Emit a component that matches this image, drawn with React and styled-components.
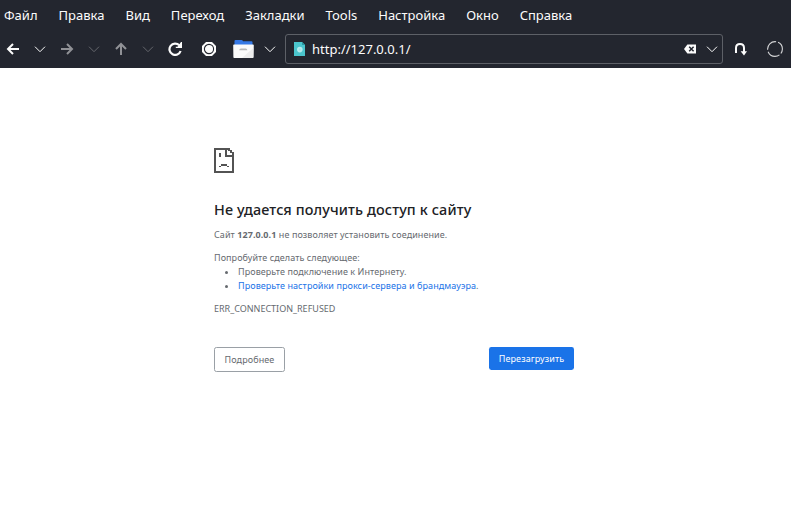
import React from "react";
import styled, { createGlobalStyle } from "styled-components";

const GlobalStyle = createGlobalStyle`
  * { box-sizing: border-box; }
  body { margin: 0; background: #fff; overflow: hidden; font-family: "Noto Sans", sans-serif; }
`;

const Window = styled.div`
  display: flex;
  flex-direction: column;
  width: 791px;
  height: 506px;
`;

const MenuBar = styled.nav`
  display: flex;
  gap: 21px;
  height: 31px;
  padding-left: 4px;
  background: #23262f;
  color: #fcfcfc;
  font-size: 13px;
  line-height: 31px;
  white-space: nowrap;
`;

const MenuItem = styled.span`
  flex: 0 0 auto;
`;

const ToolBar = styled.div`
  display: flex;
  align-items: flex-start;
  height: 37px;
  padding-top: 3px;
  background: #23262f;
  color: #fcfcfc;
`;

const Tool = styled.div`
  display: flex;
  flex: 0 0 ${(p) => p.$width}px;
  align-items: center;
  justify-content: center;
  height: 30px;
  opacity: ${(p) => (p.$faded ? p.$faded : 1)};
  svg { display: block; flex: none; }
`;

const AddressField = styled.div`
  display: flex;
  align-items: center;
  width: 438px;
  height: 30px;
  margin-left: 1px;
  padding-left: 8px;
  border: 1px solid #5d6067;
  border-radius: 3px;
  font-size: 13px;
  svg { display: block; flex: none; }
`;

const Address = styled.span`
  flex: 1;
  margin-left: 7px;
  line-height: 28px;
`;

const Page = styled.main`
  width: 360px;
  margin: 80px 0 0 214px;
  color: #666a6f;
  font-size: 9px;
  letter-spacing: 0.075px;
  line-height: 14px;
  svg { display: block; }
`;

const Title = styled.h1`
  margin: 27px 0 0;
  color: #202124;
  font-size: 14.4px;
  font-weight: 500;
  letter-spacing: 0.12px;
  line-height: 20px;
`;

const Paragraph = styled.p`
  margin: ${(p) => p.$top}px 0 0;
`;

const ErrorCode = styled(Paragraph)`
  letter-spacing: 0;
`;

const Tips = styled.ul`
  margin: 0;
  padding-left: 24px;
`;

const Link = styled.a`
  color: #1a73e8;
`;

const Actions = styled.div`
  display: flex;
  align-items: flex-start;
  justify-content: space-between;
  margin-top: 31px;
`;

const Button = styled.button`
  width: ${(p) => (p.$primary ? 85 : 71)}px;
  height: ${(p) => (p.$primary ? 23 : 25)}px;
  padding: 0;
  border: ${(p) => (p.$primary ? "0" : "1px solid #9aa0a6")};
  border-radius: 2.4px;
  background: ${(p) => (p.$primary ? "#1a73e8" : "#fff")};
  color: ${(p) => (p.$primary ? "#fff" : "#666a6f")};
  font: 9px "Noto Sans", sans-serif;
  letter-spacing: 0.1px;
  white-space: nowrap;
`;

const Chevron = () => (
  <svg width="12" height="8" viewBox="0 0 12 8" fill="none" stroke="currentColor" strokeWidth="1">
    <path d="M1 1.7 6 6.7l5-5" />
  </svg>
);

const Arrow = ({ turn = 0 }) => (
  <svg width="14" height="14" viewBox="0 0 14 14" fill="none" stroke="currentColor" strokeWidth="2">
    <path transform={`rotate(${turn} 7 7)`} d="M13 7H2.5M7 2 2 7l5 5" />
  </svg>
);

const Reload = () => (
  <svg width="14" height="14" viewBox="0 0 14 14">
    <path d="M11.3 3.3A5.7 5.7 0 1 0 12.6 9" fill="none" stroke="currentColor" strokeWidth="2.2" />
    <path d="M14 0v6H7.8V4.7h1.7L13 0z" fill="currentColor" />
  </svg>
);

const Stop = () => (
  <svg width="14" height="14" viewBox="0 0 14 14">
    <path d="M4 0h6l4 4v6l-4 4H4l-4-4V4z" fill="#fcfcfc" />
    <circle cx="7" cy="7" r="4.6" fill="#fcfcfc" stroke="#23262f" strokeWidth="1.1" />
  </svg>
);

const Folder = () => (
  <svg width="21" height="18" viewBox="0 0 21 18">
    <path d="M1.5 1q0-1 1-1h6q1 0 1.5 1.2h8.5q1 0 1 1V6h-18z" fill="#3578e5" />
    <path d="M1 4.5h19q.8 0 .8.8l-.3 11.9q0 .8-.8.8H1.2q-.8 0-.8-.8L.2 5.3q0-.8.8-.8z" fill="#fafafa" />
    <path d="M20.3 8v9q0 1-.8 1H9z" fill="#ececec" />
    <path d="M6.2 10.2q.3-1.7 1.7-1.7h4.8q1.4 0 1.7 1.7z" fill="#b8b8b8" />
  </svg>
);

const SiteIcon = () => (
  <svg width="11" height="14" viewBox="0 0 11 14">
    <path d="M0 0h8l3 3v11H0z" fill="#4bc5cd" />
    <path d="M8 0v3h3z" fill="#2897a0" />
    <circle cx="5.8" cy="7.6" r="2.8" fill="#b8ebee" />
    <circle cx="5.8" cy="7.6" r="1" fill="#a0e2e7" />
  </svg>
);

const Clear = () => (
  <svg width="12" height="10" viewBox="0 0 12 10">
    <path d="M3.4.5H12v9H3.4L0 5z" fill="#fcfcfc" />
    <path d="m5.2 2.8 4.4 4.4m0-4.4L5.2 7.2" stroke="#23262f" strokeWidth="1.5" />
  </svg>
);

const HistoryButton = styled(Tool)`
  margin-left: 6px;
`;

const Go = () => (
  <svg width="12" height="13" viewBox="0 0 12 13">
    <path d="M1 10V5q0-4 4-4t4 4v4" fill="none" stroke="currentColor" strokeWidth="2" />
    <path d="M5.6 8.3H12L9 12.6z" fill="currentColor" />
  </svg>
);

const Spinner = () => (
  <svg width="16" height="16" viewBox="0 0 16 16" fill="none" stroke="#d5d6d8" strokeWidth="1.1">
    <circle cx="8" cy="8" r="7.4" strokeDasharray="13.5 2" strokeDashoffset="-6.8" />
  </svg>
);

const SadFile = () => (
  <svg width="20" height="25" viewBox="0 0 20 25" fill="#535353" shapeRendering="crispEdges">
    <path d="M0 0h16v2h2v2h2v21H0zm2 2v21h16V9h-7V2zm11 0v5h5V5h-2V3h-2V2z" fillRule="evenodd" />
    <path d="M5 5h2v4H5zM7 16h6v2H7zM5 18h2v1H5zM13 18h2v1h-2z" />
  </svg>
);

const menus = ["Файл", "Правка", "Вид", "Переход", "Закладки", "Tools", "Настройка", "Окно", "Справка"];

export default function App() {
  return (
    <Window>
      <GlobalStyle />
      <MenuBar>
        {menus.map((name) => <MenuItem key={name}>{name}</MenuItem>)}
      </MenuBar>
      <ToolBar>
        <Tool $width={26}><Arrow /></Tool>
        <Tool $width={28}><Chevron /></Tool>
        <Tool $width={26} $faded={0.5}><Arrow turn={180} /></Tool>
        <Tool $width={28} $faded={0.3}><Chevron /></Tool>
        <Tool $width={26} $faded={0.5}><Arrow turn={90} /></Tool>
        <Tool $width={28} $faded={0.3}><Chevron /></Tool>
        <Tool $width={26}><Reload /></Tool>
        <Tool $width={42}><Stop /></Tool>
        <Tool $width={26}><Folder /></Tool>
        <Tool $width={28}><Chevron /></Tool>
        <AddressField>
          <SiteIcon />
          <Address>http://127.0.0.1/</Address>
          <Clear />
          <HistoryButton $width={20}><Chevron /></HistoryButton>
        </AddressField>
        <Tool $width={36}><Go /></Tool>
        <Tool $width={32}><Spinner /></Tool>
      </ToolBar>
      <Page>
        <SadFile />
        <Title>Не удается получить доступ к сайту</Title>
        <Paragraph $top={8}>Сайт <strong>127.0.0.1</strong> не позволяет установить соединение.</Paragraph>
        <Paragraph $top={9}>Попробуйте сделать следующее:</Paragraph>
        <Tips>
          <li>Проверьте подключение к Интернету.</li>
          <li><Link>Проверьте настройки прокси-сервера и брандмауэра</Link>.</li>
        </Tips>
        <ErrorCode $top={9}>ERR_CONNECTION_REFUSED</ErrorCode>
        <Actions>
          <Button>Подробнее</Button>
          <Button $primary>Перезагрузить</Button>
        </Actions>
      </Page>
    </Window>
  );
}
